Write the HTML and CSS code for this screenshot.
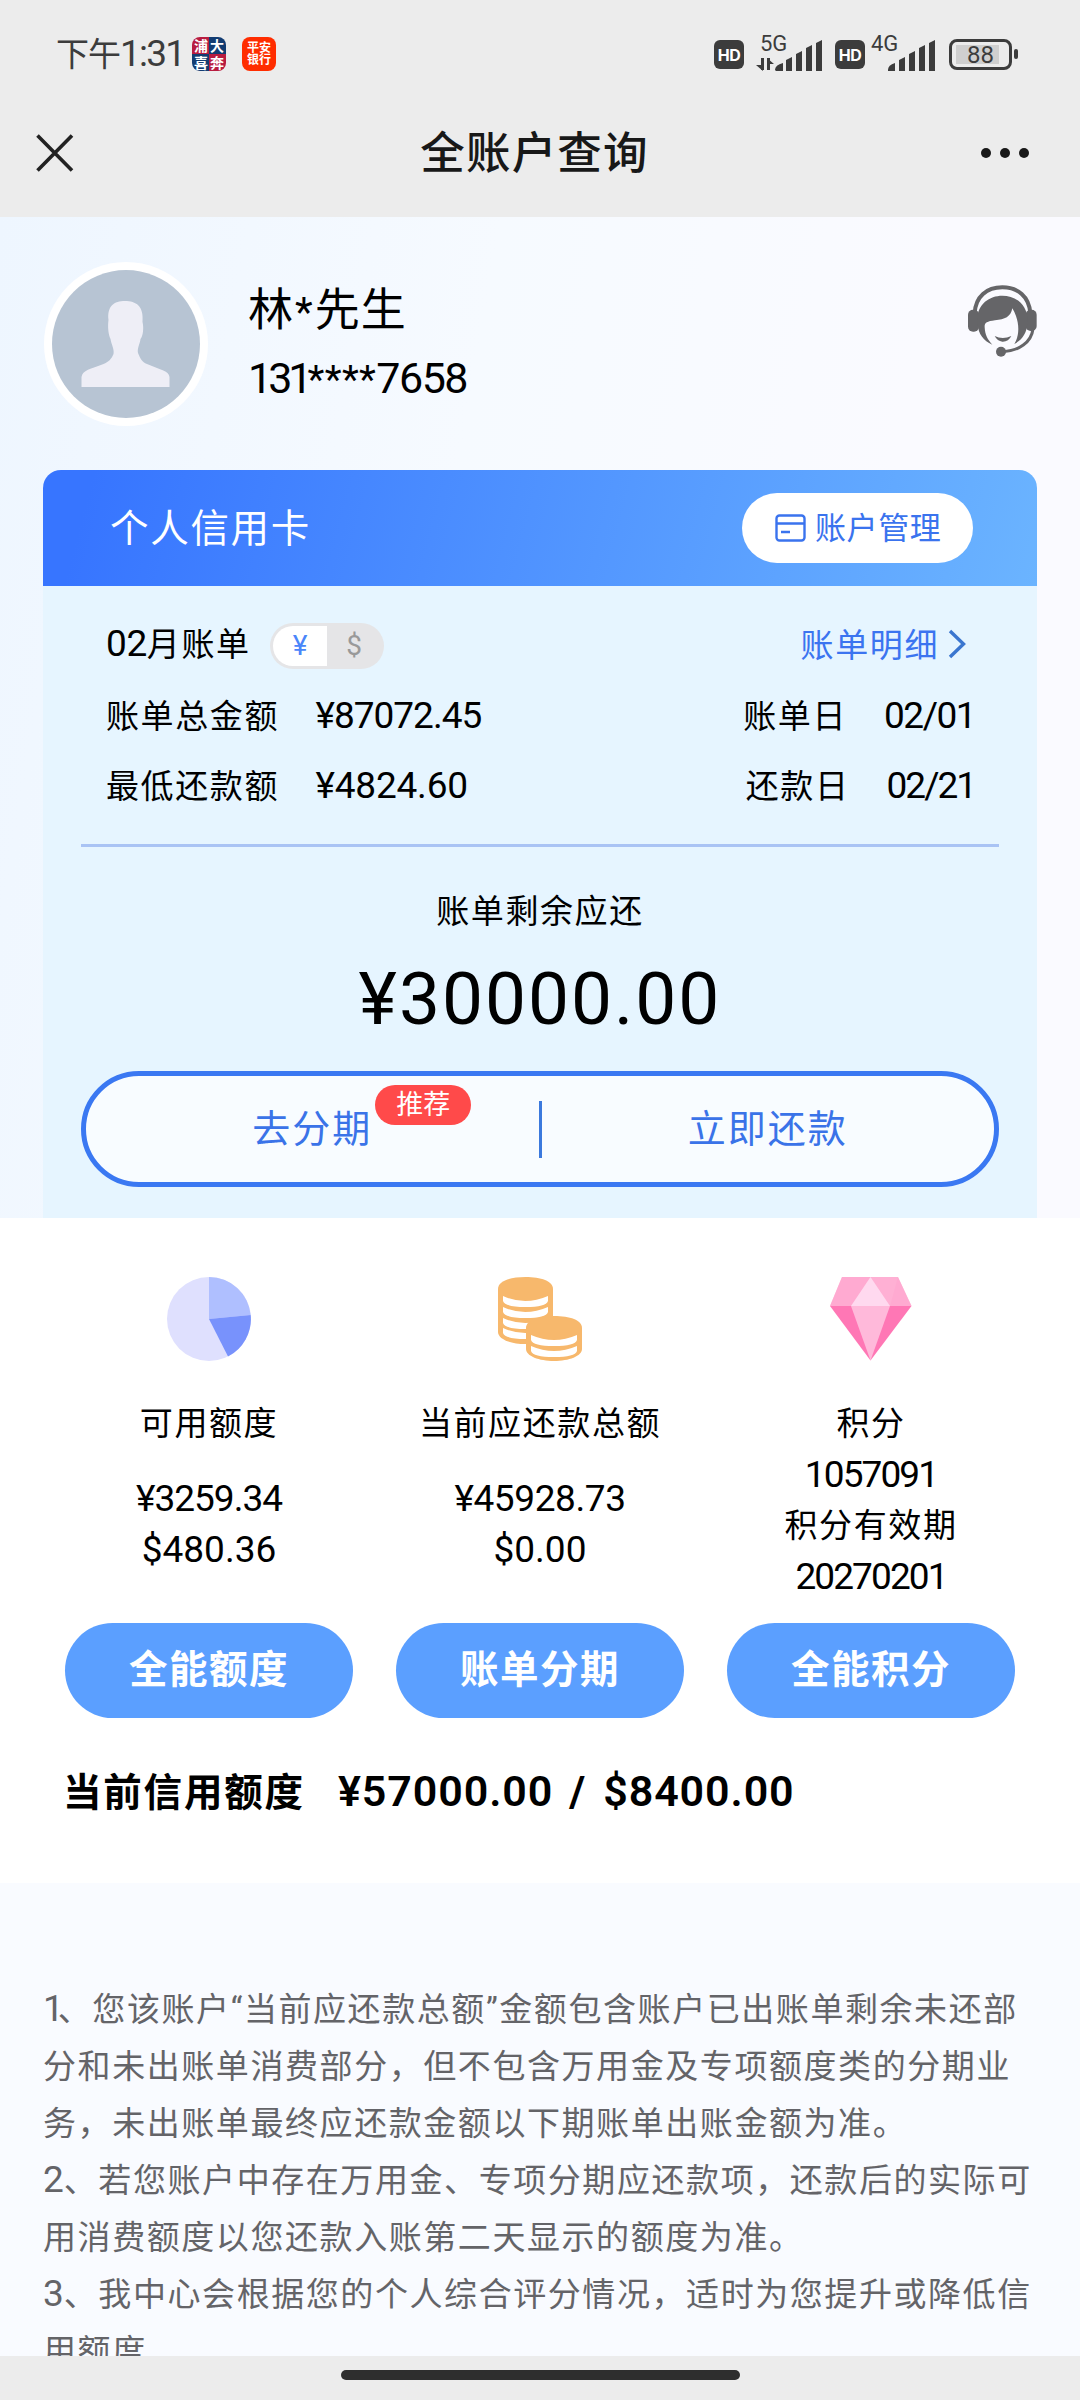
FILE: index.html
```html
<!DOCTYPE html>
<html lang="zh-CN">
<head>
<meta charset="utf-8">
<title>全账户查询</title>
<link rel="stylesheet" href="styles.css">
</head>
<body>
<header class="top">
  <div class="status">
    <span class="clock">下午<span class="clock-num">1:31</span></span>
    <div class="app app-pufa"><span>浦</span><span>大</span><span>喜</span><span>奔</span></div>
    <div class="app app-pingan"><span>平安</span><span>银行</span></div>
    <div class="indicators">
      <span class="hd">HD</span>
      <svg class="signal" width="70" height="40" viewBox="0 0 70 40">
        <text class="net" x="5" y="17">5G</text>
        <path d="M7.500 24v12M13.500 36V24" stroke="#3c3c3c" stroke-width="3" fill="none"/>
        <path d="M1 31h7v6zM12 24l7 6h-7z" fill="#3c3c3c"/>
        <path d="M20 36q0-5 8-7v8h-7zM31 26l6-3v14h-6zM41 20l6-3v20h-6zM51 14l6-3v26h-6zM61 9l6-3v31h-6z" fill="#3c3c3c"/>
      </svg>
      <span class="hd">HD</span>
      <svg class="signal signal-4g" width="70" height="40" viewBox="0 0 70 40">
        <text class="net" x="3" y="17">4G</text>
        <path d="M20 36q0-5 7-7v8h-7zM31 26l6-3v14h-6zM41 20l6-3v20h-6zM51 14l6-3v26h-6zM61 9l6-3v31h-6z" fill="#3c3c3c"/>
      </svg>
      <span class="battery"><span class="battery-level">88</span></span><span class="battery-tip"></span>
    </div>
  </div>
  <nav class="nav">
    <svg class="close" width="38" height="38" viewBox="0 0 38 38"><path d="M1.500 1.500L36 36.500M36 1.500L1.500 36.500" stroke="#222" stroke-width="3.600"/></svg>
    <h1 class="title">全账户查询</h1>
    <span class="more"><i></i><i></i><i></i></span>
  </nav>
</header>

<main class="page">
  <section class="hero">
    <div class="profile">
      <svg class="avatar" width="164" height="164" viewBox="-8 -8 164 164">
        <circle cx="74" cy="74" r="82" fill="#fff"/>
        <circle cx="74" cy="74" r="74" fill="#b7c4d3"/>
        <path d="M56.500 50C55 36 62 31 73 31s19 5 17.500 21C92 58 91 66 88.500 69C88 74 85 78 86 83c2 5 4 9 9 11c14 6 22 7 22.500 13v10h-88v-10c1-7 9-8 22-13c5-2 8-5 10-10c1-5-2-9-3-15c-2-4-3-12-2-19z" fill="#eeeef6"/>
      </svg>
      <div class="who">
        <div class="name">林<span class="star">*</span>先生</div>
        <div class="phone"><span class="prefix">131</span><span class="mask">****</span>7658</div>
      </div>
      <svg class="service" width="69" height="72" viewBox="69 58 207 216">
        <path d="M89 142C92 92 125 65 172 65s80 27 84 77" fill="none" stroke="#656568" stroke-width="12"/>
        <rect x="69" y="132" width="33" height="66" rx="15" fill="#656568"/>
        <rect x="242" y="132" width="33" height="64" rx="15" fill="#656568"/>
        <path d="M98 175C90 120 130 90 172 90C215 90 252 120 247 172C246 202 232 222 208 235C227 205 222 160 202 128C197 154 180 161 150 164C125 167 118 172 119 185C120 208 128 222 142 237C115 225 100 205 98 175z" fill="#656568"/>
        <path d="M149 211Q173 223 199 211Q190 229 172 228Q157 226 149 211z" fill="#656568"/>
        <path d="M172 258C222 256 259 230 264 190" fill="none" stroke="#656568" stroke-width="9"/>
        <circle cx="168" cy="258" r="15" fill="#656568"/>
      </svg>
    </div>

    <div class="card">
      <div class="card-head">
        <h2 class="card-title">个人信用卡</h2>
        <div class="manage">
          <svg width="31" height="28" viewBox="0 0 31 28" fill="none" stroke="#3a73ee" stroke-width="2.400"><rect x="1.500" y="1.500" width="28" height="25" rx="3"/><path d="M1.500 9.500h28M6 18h9"/></svg>
          <span class="manage-label">账户管理</span>
        </div>
      </div>
      <div class="card-body">
        <div class="row row-month">
          <div class="month"><span class="num">02</span><span class="zh">月账单</span></div>
          <div class="toggle"><span class="toggle-on">¥</span><span class="toggle-off">$</span></div>
          <div class="detail"><span class="zh">账单明细</span><svg width="18" height="30" viewBox="0 0 18 30"><path d="M2 2L15.500 15L2 28" fill="none" stroke="#3b76cf" stroke-width="3.400"/></svg></div>
        </div>
        <div class="row row-total">
          <span class="zh">账单总金额</span><span class="num value">¥87072.45</span>
          <span class="zh right">账单日</span><span class="num date">02/01</span>
        </div>
        <div class="row row-min">
          <span class="zh">最低还款额</span><span class="num value">¥4824.60</span>
          <span class="zh right">还款日</span><span class="num date">02/21</span>
        </div>
        <div class="rule"></div>
        <div class="remain zh">账单剩余应还</div>
        <div class="amount">¥30000.00</div>
        <div class="actions">
          <div class="action"><span class="action-label">去分期<span class="badge">推荐</span></span></div>
          <div class="split"></div>
          <div class="action"><span class="action-label">立即还款</span></div>
        </div>
      </div>
    </div>
  </section>

  <section class="stats">
    <div class="columns">
      <div class="col">
        <svg class="icon" width="84" height="84" viewBox="0 0 84 84">
          <circle cx="42" cy="42" r="42" fill="#dfe0fe"/>
          <path d="M42 42V0A42 42 0 0 1 83.700 38z" fill="#afbfff"/>
          <path d="M42 42L83.700 38A42 42 0 0 1 61 79.500z" fill="#7892fc"/>
        </svg>
        <div class="label zh">可用额度</div>
        <div class="values"><div class="num">¥3259.34</div><div class="num num-wide">$480.36</div></div>
        <div class="btn">全能额度</div>
      </div>
      <div class="col">
        <svg class="icon" width="84" height="84" viewBox="0 0 84 84">
          <path d="M0 12C0 4 12 0 27.500 0S55 4 55 12V55C55 62 43 67 27.500 67S0 62 0 55z" fill="#f7b86c"/>
          <path d="M5 19Q27 29 50 19V24Q48 30 27.500 30T5 24zM5 30Q27 40 50 30V35Q48 41 27.500 41T5 35zM5 41Q27 51 50 41V46Q48 52 27.500 52T5 46zM5 51Q27 61 50 51V56Q48 62 27.500 62T5 56z" fill="#fff"/>
          <path d="M28 51C28 43 40 39 56 39S84 43 84 51V72C84 79 71 84 56 84S28 79 28 72z" fill="#f7b86c"/>
          <path d="M33 58Q56 68 79 58V63Q77 69 56 69T33 63zM33 69Q56 79 79 69V74Q77 80 56 80T33 74z" fill="#fff"/>
        </svg>
        <div class="label zh">当前应还款总额</div>
        <div class="values"><div class="num num-mid">¥45928.73</div><div class="num num-wide">$0.00</div></div>
        <div class="btn">账单分期</div>
      </div>
      <div class="col">
        <svg class="icon" width="82" height="84" viewBox="0 0 82 84">
          <path d="M12 0H68L81.500 29H0z" fill="#ffb0d4"/>
          <path d="M12 0H40.500L21 29H0zM68 0L60 29H81.500z" fill="#ffa6cf" opacity=".6"/>
          <path d="M40.500 0L21 29H60z" fill="#ffd9ef"/>
          <path d="M0 29H81.500L40.500 83.500z" fill="#ff77b5"/>
          <path d="M21 29H60L40.500 83.500z" fill="#ffb9da"/>
        </svg>
        <div class="label zh">积分</div>
        <div class="values values-points"><div class="num num-tight">1057091</div><div class="zh">积分有效期</div><div class="num num-tight">20270201</div></div>
        <div class="btn">全能积分</div>
      </div>
    </div>
    <div class="limit"><span class="limit-label">当前信用额度</span><span class="limit-num">¥57000.00</span><span class="limit-slash">/</span><span class="limit-num">$8400.00</span></div>
  </section>

  <section class="notes">
    <p><span class="n n1">1</span>、您该账户<span class="q">“</span>当前应还款总额<span class="q">”</span>金额包含账户已出账单剩余未还部<br>分和未出账单消费部分，但不包含万用金及专项额度类的分期业<br>务，未出账单最终应还款金额以下期账单出账金额为准。</p>
    <p><span class="n">2</span>、若您账户中存在万用金、专项分期应还款项，还款后的实际可<br>用消费额度以您还款入账第二天显示的额度为准。</p>
    <p><span class="n n3">3</span>、我中心会根据您的个人综合评分情况，适时为您提升或降低信<br>用额度</p>
  </section>
</main>
<footer class="homebar"><span class="handle"></span></footer>
</body>
</html>
```
FILE: styles.css
```css
* { box-sizing: border-box; }
body {
  margin: 0;
  width: 1080px;
  height: 2400px;
  overflow: hidden;
  display: flex;
  flex-direction: column;
  background: #f9fbff;
  color: #000;
  font-family: "Noto Sans CJK SC", sans-serif;
}
h1, h2, p { margin: 0; font-weight: 400; }
svg { display: block; flex: none; }

.zh { font-size: 33px; letter-spacing: 1.600px; white-space: nowrap; }
.num { font-family: Roboto, sans-serif; font-size: 37px; letter-spacing: -1px; white-space: nowrap; }
.num-wide { letter-spacing: 0; }
.num-mid { letter-spacing: -.4px; }
.num-tight { letter-spacing: -1.900px; }

/* status bar and navigation */
.top { height: 217px; flex: none; background: #ececec; }
.status { height: 108px; display: flex; align-items: center; padding: 0 62px 0 56px; }
.clock { width: 136px; font-size: 33px; line-height: 40px; color: #3c3c3c; white-space: nowrap; letter-spacing: -1px; margin-top: -3px; }
.clock-num { font-family: Roboto, sans-serif; font-size: 37px; letter-spacing: -1.800px; }
.app { width: 34px; height: 34px; border-radius: 8px; color: #fff; font-weight: 700; flex: none; }
.app-pufa {
  display: grid; grid-template-columns: 16px 16px; justify-content: center; font-size: 14px; line-height: 16px; text-align: center;
  background: conic-gradient(#123c72 25%, #b81c40 0 50%, #123c72 0 75%, #b81c40 0);
}
.app-pingan { margin-left: 16px; background: #ff2d00; font-size: 12px; line-height: 12px; text-align: center; display: flex; flex-direction: column; padding-top: 4px; }
.indicators { margin-left: auto; display: flex; align-items: center; }
.hd {
  width: 30px; height: 29px; border-radius: 6px; background: #3c3c3c; color: #fff;
  font: 700 16px/30px Inter, sans-serif; text-align: center; letter-spacing: -.5px;
}
.signal { margin-left: 11px; margin-right: 10px; overflow: visible; }
.signal-4g { margin: 0 11px 0 3px; }
.net { font-family: Roboto, sans-serif; font-size: 22px; fill: #3c3c3c; }
.battery { width: 63px; height: 31px; border: 3px solid #3c3c3c; border-radius: 8px; padding: 3px 4px; }
.battery-level {
  display: block; height: 19px; background: linear-gradient(90deg, #cfcfcf 88%, transparent 0);
  font: 400 24px/20px Roboto, sans-serif; color: #3c3c3c; text-align: center;
}
.battery-tip { width: 4px; height: 10px; margin-left: 2px; border-radius: 2px; background: #3c3c3c; }
.nav { height: 89px; display: flex; align-items: center; justify-content: space-between; padding: 0 51px 0 36px; }
.title { font-size: 44.500px; font-weight: 500; letter-spacing: 1.200px; line-height: 60px; margin: -5px 0 0 14px; color: #181818; }
.more { display: flex; gap: 9px; }
.more i { width: 10px; height: 10px; border-radius: 50%; background: #181818; }

/* profile */
.page { height: 2139px; flex: none; overflow: hidden; }
.hero { height: 1001px; padding: 0 43px; background: linear-gradient(100deg, #eef6ff 0%, #f6faff 40%, #fafaff 75%); }
.profile { height: 253px; display: flex; align-items: flex-start; padding-top: 45px; }
.avatar { margin-left: 1px; }
.who { margin: 11px auto 0 40px; }
.name { font-size: 45px; letter-spacing: 1px; line-height: 70px; margin-top: -1px; }
.star { font-family: Roboto, sans-serif; font-size: 41px; line-height: 0; margin: 0 1px; }
.phone { font-family: Roboto, sans-serif; font-size: 43px; line-height: 73px; letter-spacing: -1.500px; }
.prefix { letter-spacing: -4px; margin-right: -1px; }
.mask { letter-spacing: .4px; font-size: 39px; line-height: 0; }
.service { margin-top: 23px; }

/* credit card */
.card-head {
  height: 116px; border-radius: 18px 18px 0 0; display: flex; align-items: center; justify-content: space-between;
  padding: 0 64px 0 67px; background: linear-gradient(105deg, #3775ff 5%, #6bb4ff 100%);
}
.card-title { font-size: 38.500px; letter-spacing: 1.700px; line-height: 60px; margin-top: -7px; color: #fff; }
.manage { width: 231px; height: 70px; border-radius: 35px; background: #fff; display: flex; align-items: center; padding-left: 33px; gap: 9px; }
.manage-label { font-size: 31px; letter-spacing: .6px; line-height: 50px; color: #3a73ee; margin-top: -4px; }
.card-body { height: 632px; background: #e6f5ff; padding: 23px 38px 0; }
.row { display: flex; align-items: baseline; padding: 0 24px 0 25px; line-height: 71px; height: 71px; }
.row-month { height: 70px; line-height: 70px; align-items: center; }
.month { display: flex; align-items: baseline; width: 164px; margin-top: -3px; }
.month .num { letter-spacing: -.4px; }
.row-min { height: 69px; line-height: 69px; }
.toggle { width: 114px; height: 46px; padding: 3px; border-radius: 23px; background: #e5e5e7; display: flex; font: 28px/40px Roboto, sans-serif; text-align: center; margin-top: 4px; }
.toggle-on { width: 54px; border-radius: 20px 0 0 20px; background: #fff; color: #4a86fa; }
.toggle-off { flex: 1; color: #999; }
.detail { margin-left: auto; display: flex; align-items: center; gap: 9px; color: #3b74f0; padding-right: 9px; }
.detail .zh { margin-top: -3px; }
.value { margin-left: 36.500px; }
.row-min .value { letter-spacing: -.2px; }
.right { margin-left: auto; }
.date { margin-left: 37px; letter-spacing: -1.500px; }
.row-min .date { letter-spacing: -2px; }
.rule { height: 3px; margin-top: 25px; background: #a9c3f4; }
.remain { margin-top: 32px; line-height: 60px; text-align: center; }
.amount { margin-top: 19px; font: 73px/82px Roboto, sans-serif; height: 80px; letter-spacing: 2px; text-align: center; }
.actions { margin-top: 33px; height: 116px; border: 5px solid #3a78f2; border-radius: 58px; background: #f8fcff; display: flex; align-items: center; }
.action { flex: 1; display: flex; justify-content: center; }
.action-label { position: relative; font-size: 38px; letter-spacing: 2px; line-height: 60px; color: #3a73e8; margin-top: -7px; }
.split { width: 3px; height: 57px; background: #3b79dd; }
.badge {
  position: absolute; left: 123px; top: -11px; width: 96px; height: 40px; border-radius: 20px; background: #ff4a4a;
  color: #fff; font-size: 27px; letter-spacing: 0; line-height: 36px; text-align: center;
}

/* stats */
.stats { height: 665px; background: #fff; padding: 59px 65px 0; }
.columns { display: grid; grid-template-columns: repeat(3, 288px); column-gap: 43px; height: 441px; }
.col { display: flex; flex-direction: column; align-items: center; }
.label { margin-top: 35px; line-height: 51px; }
.values { margin-top: 26px; line-height: 51px; text-align: center; }
.values-points { margin-top: 2px; }
.values .zh { margin: -2px 0 2px; }
.btn { width: 288px; height: 95px; margin-top: auto; border-radius: 48px; background: #5b9fff; color: #fff; font-size: 38.500px; font-weight: 600; letter-spacing: 1.500px; line-height: 87px; text-align: center; }
.limit { margin-top: 41px; height: 60px; line-height: 60px; display: flex; align-items: baseline; white-space: nowrap; font-weight: 500; }
.limit-label { font-size: 38.500px; font-weight: 600; letter-spacing: 1.800px; margin-left: -2px; width: 275px; }
.limit-num { font-family: Roboto, sans-serif; font-size: 43px; font-weight: 600; letter-spacing: .9px; }
.limit-slash { font-family: Roboto, sans-serif; font-size: 43px; font-weight: 700; margin: 0 18px 0 16px; }

/* notes */
.notes { height: 473px; padding: 96px 0 0 43px; background: #f9fbff; color: #646468; }
.notes p { font-size: 33px; letter-spacing: 1.570px; line-height: 57px; white-space: nowrap; }
.n { font-family: Roboto, sans-serif; font-size: 37px; line-height: 0; letter-spacing: 0; }
.n1 { letter-spacing: -6px; }
.q { font-family: Roboto, sans-serif; line-height: 0; }

.homebar { height: 44px; flex: none; background: #ececec; display: flex; justify-content: center; padding-top: 14px; }
.handle { width: 399px; height: 10px; border-radius: 5px; background: #2e2e2e; }
```
